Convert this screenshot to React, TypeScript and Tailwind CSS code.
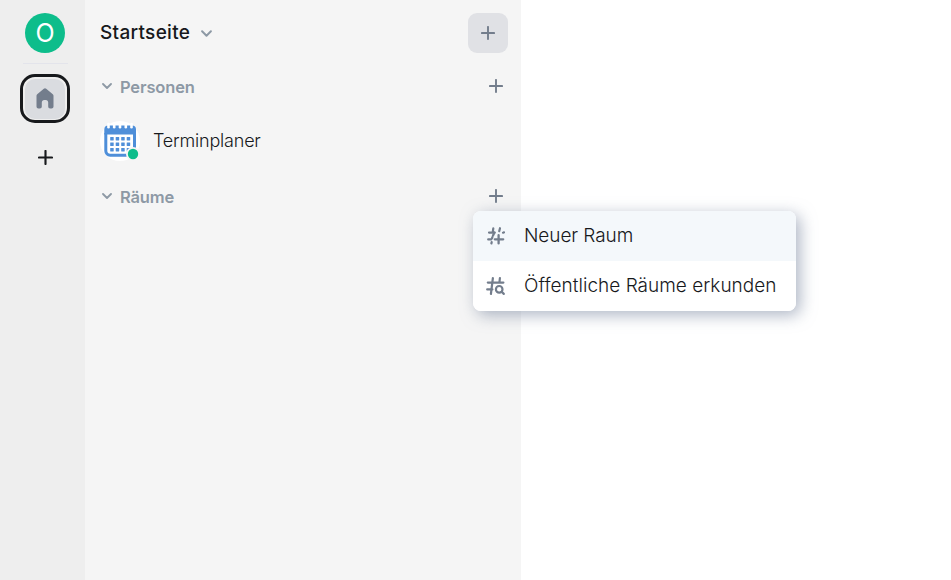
import type { ReactNode } from "react";

function Chevron({ className }: { className: string }) {
  return (
    <svg viewBox="0 0 10 6" className={className} fill="none" stroke="#8d99a5" strokeWidth="1.8" strokeLinecap="round" strokeLinejoin="round">
      <path d="M1 1l4 4 4-4" />
    </svg>
  );
}

function Plus({ className, color, width = 1.9 }: { className: string; color: string; width?: number }) {
  return (
    <svg viewBox="0 0 14 14" className={className} fill="none" stroke={color} strokeWidth={width} strokeLinecap="round">
      <path d="M7 .9v12.2M.9 7h12.2" />
    </svg>
  );
}

function HomeIcon() {
  return (
    <svg viewBox="0 0 18 21" className="h-[21px] w-[18px]" fill="#737d8c">
      <path d="M7.8.7a1.8 1.8 0 0 1 2.4 0l6.6 5.600c.5.4.7.900.7 1.500v10.700c0 1.100-.8 2-1.900 2h-1.500c-1.100 0-1.900-.9-1.900-2v-4c0-1.400-1-2.400-2.400-2.400h-1.600c-1.400 0-2.400 1-2.400 2.400v4c0 1.100-.8 2-1.900 2H2.400c-1.100 0-1.900-.9-1.900-2V7.800c0-.6.200-1.100.7-1.500z" />
    </svg>
  );
}

function CalendarIcon() {
  const dots = [0, 1, 2, 3];
  return (
    <svg viewBox="0 0 40 40" className="size-10">
      <circle cx="20" cy="20" r="20" fill="#fff" />
      <path d="M5.800 12v17.900a4.300 4.300 0 0 0 4.300 4.300h20.900a3.500 3.500 0 0 0 3.500-3.500V12" fill="none" stroke="#4f8fd9" strokeWidth="3" />
      <path d="M4.300 13.400V8.500a4 4 0 0 1 4-4h23.700a4 4 0 0 1 4 4v4.900z" fill="#4f8fd9" />
      {[8.5, 14.2, 20, 25.8, 31.5].map((x) => (
        <path key={x} d={`M${x} 3v3.300`} stroke="#fff" strokeWidth="2.600" strokeLinecap="round" />
      ))}
      {[0, 1, 2].map((row) =>
        dots.map((col) => (
          <rect key={`${row}-${col}`} x={10.200 + col * 5.500} y={16 + row * 5.500} width="3.500" height="3.400" rx=".3" fill="#4f8fd9" />
        )),
      )}
      <circle cx="33" cy="33" r="7" fill="#f5f5f5" />
      <circle cx="33" cy="33" r="5.200" fill="#0dbd8b" />
    </svg>
  );
}

function HashPlus() {
  return (
    <svg viewBox="0 0 20 20" className="size-5" fill="none" stroke="#737d8c" strokeWidth="2.200" strokeLinecap="round">
      <path d="M7.300 2.300L6.700 6.600M14 2.200l-.8 3M3 6.600h5.600M17 6.700l1-.3M2.200 13.400h3M6.400 11L6 12.400M5.700 16l-.3 1.500" />
      <path d="M8.500 6.600l-1.500 3M12.600 9.200v8.200M8.800 13.300h8.400" strokeWidth="2.300" />
    </svg>
  );
}

function HashSearch() {
  return (
    <svg viewBox="0 0 20 20" className="size-5" fill="none" stroke="#737d8c" strokeWidth="2.200" strokeLinecap="round">
      <path d="M6.900 2L4.900 18M13.900 2l-.5 4.600M1.800 6.600h15.600M1.200 13.400h5.200" />
      <circle cx="13.200" cy="13.300" r="3.300" />
      <path d="M15.700 15.800l2.100 2.100" />
    </svg>
  );
}

function Section({ title }: { title: string }) {
  return (
    <div className="flex h-6 items-center pr-[18px] pl-[17px]">
      <Chevron className="h-[6px] w-[10px]" />
      <h2 className="ml-2 pt-0.5 text-[16.500px] leading-6 font-semibold tracking-[-0.15px] text-[#8d99a5]">{title}</h2>
      <Plus className="ml-auto size-[14px]" color="#737d8c" />
    </div>
  );
}

function MenuItem({ icon, label, active }: { icon: ReactNode; label: string; active?: boolean }) {
  return (
    <button className={`flex h-[50px] w-full items-center pl-[13px] text-left text-[19px] font-light text-[#17191c] ${active ? "bg-[#f4f8fb] tracking-[-0.08px]" : "bg-white tracking-[0.02px]"}`}>
      {icon}
      <span className="ml-[18px] whitespace-nowrap">{label}</span>
    </button>
  );
}

export default function App() {
  return (
    <div className="relative flex h-[580px] w-[951px] overflow-hidden bg-white font-['Inter',sans-serif]">
      <nav className="flex w-[85px] shrink-0 flex-col bg-[#eeeeee] pt-[13px]">
        <div className="flex w-[90px] flex-col items-center">
          <div className="flex size-10 items-center justify-center rounded-full bg-[#0dbd8b] text-[25px] leading-none text-white">O</div>
          <div className="mt-2.5 h-px w-[45px] bg-[#e3e4eb]" />
          <div className="mt-2.5 flex h-[49px] w-[50px] items-center justify-center rounded-[15px] border-3 border-[#17191c] bg-[#eeeeee]">
            <div className="flex size-10 items-center justify-center rounded-[10px] bg-[#dadce0] pr-px"><HomeIcon /></div>
          </div>
          <Plus className="mt-[27px] ml-px size-[15px]" color="#17191c" width={2} />
        </div>
      </nav>

      <aside className="flex w-[436px] shrink-0 flex-col bg-[#f5f5f5] pt-[13px]">
        <header className="flex h-10 items-center pr-[13px] pl-[15px]">
          <h1 className="text-[19px] leading-6 font-medium tracking-[0.3px] text-[#17191c]">Startseite</h1>
          <Chevron className="ml-[11px] h-[7px] w-[11px]" />
          <button className="ml-auto flex size-10 items-center justify-center rounded-[9px] bg-[#e0e1e5]">
            <Plus className="size-[14px]" color="#737d8c" />
          </button>
        </header>
        <div className="mt-[21px]"><Section title="Personen" /></div>
        <div className="mt-[23px] flex h-10 items-center pl-[15px]">
          <CalendarIcon />
          <span className="ml-[13px] -mt-0.5 text-[18px] font-light tracking-[-0.200px] text-[#17191c]">Terminplaner</span>
        </div>
        <div className="mt-[23px]"><Section title="Räume" /></div>
      </aside>

      <div className="absolute top-[211px] left-[473px] w-[323px] overflow-hidden rounded-lg bg-white shadow-[4px_4px_16px_rgba(118,131,156,0.600)]">
        <MenuItem icon={<HashPlus />} label="Neuer Raum" active />
        <MenuItem icon={<HashSearch />} label="Öffentliche Räume erkunden" />
      </div>
    </div>
  );
}
